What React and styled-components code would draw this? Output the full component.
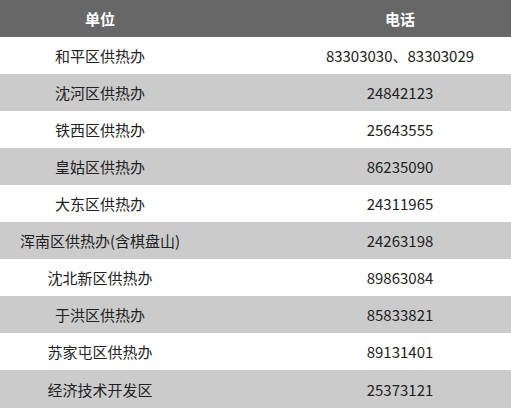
import React from 'react';
import styled, { createGlobalStyle } from 'styled-components';

const GlobalStyle = createGlobalStyle`
  body {
    margin: 0;
    background: #ffffff;
    font-family: "Noto Sans CJK SC", "Noto Sans", sans-serif;
  }
`;

const Table = styled.div`
  width: 511px;
  display: flex;
  flex-direction: column;
`;

const Row = styled.div`
  display: grid;
  grid-template-columns: 200px 1fr;
  height: ${p => (p.$last ? 38 : 37)}px;
  align-items: center;
  background: ${p => (p.$head ? '#676767' : p.$gray ? '#cbcbcb' : '#ffffff')};
  color: ${p => (p.$head ? '#ffffff' : '#222222')};
  font-weight: ${p => (p.$head ? 700 : 400)};
  font-size: 15px;
`;

const Cell = styled.div`
  text-align: center;
  white-space: nowrap;
`;

const PhoneCell = styled(Cell)`
  padding-left: 89px;
`;

const rows = [
  ['和平区供热办', '83303030、83303029'],
  ['沈河区供热办', '24842123'],
  ['铁西区供热办', '25643555'],
  ['皇姑区供热办', '86235090'],
  ['大东区供热办', '24311965'],
  ['浑南区供热办(含棋盘山)', '24263198'],
  ['沈北新区供热办', '89863084'],
  ['于洪区供热办', '85833821'],
  ['苏家屯区供热办', '89131401'],
  ['经济技术开发区', '25373121'],
];

const App = () => (
  <>
    <GlobalStyle />
    <Table>
      <Row $head>
        <Cell>单位</Cell>
        <PhoneCell>电话</PhoneCell>
      </Row>
      {rows.map(([name, phone], i) => (
        <Row key={name} $gray={i % 2 === 1} $last={i === rows.length - 1}>
          <Cell>{name}</Cell>
          <PhoneCell>{phone}</PhoneCell>
        </Row>
      ))}
    </Table>
  </>
);

export default App;
